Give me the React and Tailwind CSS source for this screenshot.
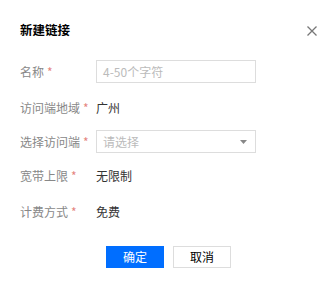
import React from "react";

const font = { fontFamily: '"Noto Sans CJK SC", "Noto Sans", sans-serif' };

function Label({ children }) {
    return (
        <div className="w-[76px] shrink-0 text-[12px] text-[#888]">
            {children}
            <span className="ml-[3px] text-[#e5847f]">*</span>
        </div>
    );
}

export default function App() {
    return (
        <div className="w-[335px] h-[288px] bg-white pl-5 pt-5 relative" style={font}>
            {/* Header */}
            <div className="flex items-center justify-between pr-[18px] h-5">
                <div className="text-[12.5px] font-bold text-[#000]">新建链接</div>
                <svg width="10" height="10" viewBox="0 0 10 10" className="mt-[1px]">
                    <path d="M0.5 0.5 L9.5 9.5 M9.5 0.5 L0.5 9.5" stroke="#777" strokeWidth="1.3" />
                </svg>
            </div>

            {/* Form */}
            <div className="mt-5 flex items-center h-[23px]">
                <Label>名称</Label>
                <div className="w-[160px] h-[23px] border border-[#ddd] flex items-center px-[6px] text-[12px] text-[#bbb]">
                    4-50个字符
                </div>
            </div>

            <div className="mt-[13px] flex items-center h-[23px]">
                <Label>访问端地域</Label>
                <div className="text-[12px] text-[#333]">广州</div>
            </div>

            <div className="mt-[11px] flex items-center h-[23px]">
                <Label>选择访问端</Label>
                <div className="w-[160px] h-[23px] border border-[#ddd] flex items-center justify-between px-[6px] pr-[8px] text-[12px] text-[#bbb]">
                    <span>请选择</span>
                    <svg width="7" height="4" viewBox="0 0 7 4">
                        <path d="M0 0 L7 0 L3.5 4 Z" fill="#888" />
                    </svg>
                </div>
            </div>

            <div className="mt-[11px] flex items-center h-[23px]">
                <Label>宽带上限</Label>
                <div className="text-[12px] text-[#333]">无限制</div>
            </div>

            <div className="mt-[13px] flex items-center h-[23px]">
                <Label>计费方式</Label>
                <div className="text-[12px] text-[#333]">免费</div>
            </div>

            {/* Buttons */}
            <div className="mt-[23px] flex gap-[9px] pl-[86px]">
                <button className="w-[58px] h-[22px] bg-[#006eff] text-white text-[12px]">确定</button>
                <button className="w-[58px] h-[22px] border border-[#ddd] bg-white text-[#000] text-[12px]">取消</button>
            </div>
        </div>
    );
}
